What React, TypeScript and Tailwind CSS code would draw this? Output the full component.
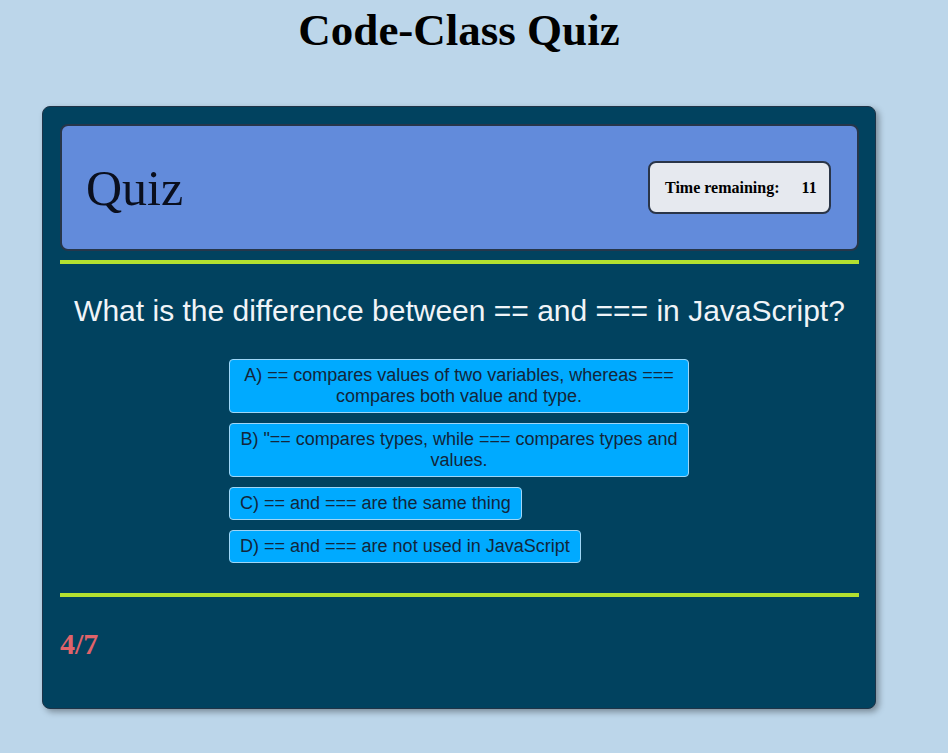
import React from "react";

const options = [
  "A) == compares values of two variables, whereas === compares both value and type.",
  'B) "== compares types, while === compares types and values.',
  "C) == and === are the same thing",
  "D) == and === are not used in JavaScript",
];

export default function App() {
  return (
    <div className="min-h-[753px] w-full bg-[#bcd6ea] pt-[2px]">
      <div className="ml-[42px] w-[834px]">
        <h1 className="text-center font-['Liberation_Serif',serif] text-[45px] font-bold leading-[56px] text-black">
          Code-Class Quiz
        </h1>
        <div className="mt-[48px] h-[603px] rounded-[8px] border border-[#1e3448] bg-[#01425f] pl-[17px] pr-[16px] pt-[17px] shadow-[3px_3px_6px_rgba(0,0,0,0.35)]">
          <div className="flex h-[127px] items-center justify-between rounded-[8px] border-2 border-[#26364a] bg-[#628bdb] pl-[24px] pr-[26px]">
            <span className="font-['Liberation_Serif',serif] text-[50px] leading-none text-[#0a0f1e]">
              Quiz
            </span>
            <div className="flex h-[53px] w-[183px] items-center rounded-[8px] border-2 border-[#2a3548] bg-[#e6e9ef] pl-[15px] font-['Liberation_Serif',serif] text-[16px] font-bold text-black">
              <span>Time remaining:</span>
              <span className="ml-[22px]">11</span>
            </div>
          </div>
          <div className="mt-[9px] h-[4px] bg-[#b3e030]" />
          <h2 className="mt-[29px] text-center font-['Liberation_Sans',sans-serif] text-[30px] leading-[36px] text-[#f0f4f8]">
            What is the difference between == and === in JavaScript?
          </h2>
          <div className="ml-[169px] mt-[30px] flex w-[460px] flex-col items-start gap-[10px]">
            {options.map((o) => (
              <button
                key={o}
                className="rounded-[4px] border border-[#9fd6f6] bg-[#00aaff] px-[10px] py-[5px] text-center font-['Liberation_Sans',sans-serif] text-[18px] leading-[21px] text-[#13263a]"
              >
                {o}
              </button>
            ))}
          </div>
          <div className="mt-[30px] h-[4px] bg-[#b3e030]" />
          <div className="mt-[32px] font-['Liberation_Serif',serif] text-[30px] font-bold leading-none text-[#e0636a]">
            4/7
          </div>
        </div>
      </div>
    </div>
  );
}
